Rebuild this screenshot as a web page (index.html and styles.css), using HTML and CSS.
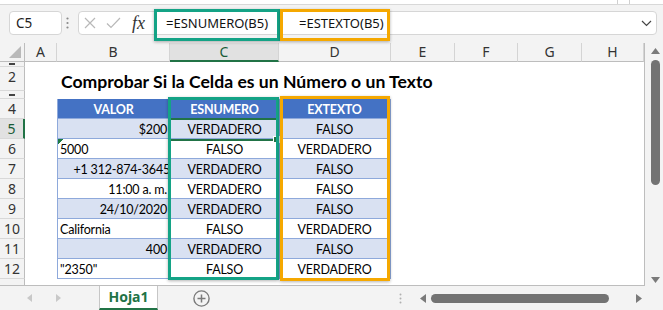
FILE: index.html
```html
<!DOCTYPE html>
<html>
<head>
<meta charset="UTF-8">
<title>ESNUMERO ESTEXTO</title>
<link rel="stylesheet" href="styles.css">
</head>
<body>
<div class="app">
	<!-- borde inferior de la cinta -->
	<div class="ribbon-edge"><span class="rb-sep"></span><span class="rb-sep"></span></div>

	<!-- barra de fórmulas -->
	<div class="formula-row">
		<div class="name-box">C5</div>
		<div class="grip">
			<svg width="3" height="12" viewBox="0 0 3 12"><circle cx="1.5" cy="1.5" r="1.1" fill="#8a8a8a"/><circle cx="1.5" cy="6" r="1.1" fill="#8a8a8a"/><circle cx="1.5" cy="10.5" r="1.1" fill="#8a8a8a"/></svg>
		</div>
		<div class="formula-box">
			<span class="fb-cancel"><svg width="12" height="12" viewBox="0 0 12 12"><path d="M1 1L11 11M11 1L1 11" stroke="#b8b8b8" stroke-width="1.2" fill="none"/></svg></span>
			<span class="fb-enter"><svg width="15" height="12" viewBox="0 0 15 12"><path d="M1 6.5L5 10.5L14 1" stroke="#b8b8b8" stroke-width="1.2" fill="none"/></svg></span>
			<span class="fx">fx</span>
			<span class="formula formula-1">=ESNUMERO(B5)</span>
			<span class="formula">=ESTEXTO(B5)</span>
			<span class="chevron"><svg width="11" height="7" viewBox="0 0 11 7"><path d="M1 1L5.5 5.5L10 1" stroke="#444" stroke-width="1.2" fill="none"/></svg></span>
		</div>
	</div>

	<!-- hoja -->
	<div class="sheet">
		<div class="grid">
			<div class="corner"><svg width="12" height="12" viewBox="0 0 12 12"><path d="M12 0V12H0Z" fill="#b9b9b9"/></svg></div>
			<div class="ch">A</div>
			<div class="ch">B</div>
			<div class="ch ch-sel">C</div>
			<div class="ch">D</div>
			<div class="ch">E</div>
			<div class="ch">F</div>
			<div class="ch">G</div>
			<div class="ch">H</div>

			<div class="rh rh-cut"><span class="dash"></span></div>
			<div class="blank span8"></div>

			<div class="rh">2</div>
			<div class="blank"></div>
			<div class="title">Comprobar Si la Celda es un Número o un Texto</div>

			<div class="rh rh-cut"><span class="dash"></span></div>
			<div class="blank span8"></div>

			<div class="rh">4</div>
			<div class="blank"></div>
			<div class="c tb th">VALOR</div>
			<div class="c tb th">ESNUMERO</div>
			<div class="c tb th last">EXTEXTO</div>
			<div class="blank span4"></div>

			<div class="rh rh-sel">5</div>
			<div class="blank"></div>
			<div class="c tb odd r">$200</div>
			<div class="c tb odd m">VERDADERO</div>
			<div class="c tb odd m last">FALSO</div>
			<div class="blank span4"></div>

			<div class="rh">6</div>
			<div class="blank"></div>
			<div class="c tb flag">5000</div>
			<div class="c tb m">FALSO</div>
			<div class="c tb m last">VERDADERO</div>
			<div class="blank span4"></div>

			<div class="rh">7</div>
			<div class="blank"></div>
			<div class="c tb odd r tight">+1 312-874-3645</div>
			<div class="c tb odd m">VERDADERO</div>
			<div class="c tb odd m last">FALSO</div>
			<div class="blank span4"></div>

			<div class="rh">8</div>
			<div class="blank"></div>
			<div class="c tb r">11:00 a. m.</div>
			<div class="c tb m">VERDADERO</div>
			<div class="c tb m last">FALSO</div>
			<div class="blank span4"></div>

			<div class="rh">9</div>
			<div class="blank"></div>
			<div class="c tb odd r">24/10/2020</div>
			<div class="c tb odd m">VERDADERO</div>
			<div class="c tb odd m last">FALSO</div>
			<div class="blank span4"></div>

			<div class="rh">10</div>
			<div class="blank"></div>
			<div class="c tb">California</div>
			<div class="c tb m">FALSO</div>
			<div class="c tb m last">VERDADERO</div>
			<div class="blank span4"></div>

			<div class="rh">11</div>
			<div class="blank"></div>
			<div class="c tb odd r">400</div>
			<div class="c tb odd m">VERDADERO</div>
			<div class="c tb odd m last">FALSO</div>
			<div class="blank span4"></div>

			<div class="rh">12</div>
			<div class="blank"></div>
			<div class="c tb">"2350"</div>
			<div class="c tb m">FALSO</div>
			<div class="c tb m last">VERDADERO</div>
			<div class="blank span4"></div>

			<div class="rh rh-end"></div>
			<div class="blank span8"></div>
		</div>

		<div class="vscroll">
			<svg width="9" height="6" viewBox="0 0 9 6"><path d="M4.5 0L9 6H0Z" fill="#7a7a7a"/></svg>
			<div class="vthumb"></div>
			<svg class="vdown" width="9" height="6" viewBox="0 0 9 6"><path d="M0 0H9L4.5 6Z" fill="#7a7a7a"/></svg>
		</div>
	</div>

	<!-- pestañas -->
	<div class="tabbar">
		<span class="nav nav-prev"><svg width="5" height="8" viewBox="0 0 5 8"><path d="M5 0V8L0 4Z" fill="#c8c8c8"/></svg></span>
		<span class="nav nav-next"><svg width="5" height="8" viewBox="0 0 5 8"><path d="M0 0L5 4L0 8Z" fill="#c8c8c8"/></svg></span>
		<div class="tab">Hoja1</div>
		<span class="add"><svg width="17" height="17" viewBox="0 0 17 17"><circle cx="8.5" cy="8.5" r="7.6" stroke="#7a7a7a" stroke-width="1.4" fill="none"/><path d="M8.5 4.5V12.5M4.5 8.5H12.5" stroke="#7a7a7a" stroke-width="1.5"/></svg></span>
		<span class="hgrip"><svg width="3" height="11" viewBox="0 0 3 11"><circle cx="1.5" cy="1.5" r="1" fill="#b0b0b0"/><circle cx="1.5" cy="5.5" r="1" fill="#b0b0b0"/><circle cx="1.5" cy="9.5" r="1" fill="#b0b0b0"/></svg></span>
		<span class="hleft"><svg width="6" height="9" viewBox="0 0 6 9"><path d="M6 0V9L0 4.5Z" fill="#7a7a7a"/></svg></span>
		<div class="hthumb"></div>
		<span class="hright"><svg width="6" height="9" viewBox="0 0 6 9"><path d="M0 0L6 4.5L0 9Z" fill="#7a7a7a"/></svg></span>
	</div>

	<!-- selección y marcos de color -->
	<div class="selection"><span class="handle"></span></div>
	<div class="mark teal mark-f1"></div>
	<div class="mark orange mark-f2"></div>
	<div class="mark teal mark-c"></div>
	<div class="mark orange mark-d"></div>
</div>
</body>
</html>
```

FILE: styles.css
```css
/* documento */
body {
	margin: 0;
	background: #f3f3f3;
	font-family: "Noto Sans", "Open Sans", sans-serif;
	color: #222;
}

.app {
	position: relative;
	width: 663px;
	height: 310px;
	overflow: hidden;
}

.ribbon-edge {
	height: 4px;
	background: #fff;
	border-bottom: 1px solid #d8d8d8;
	display: flex;
	justify-content: flex-end;
	gap: 11px;
	padding-right: 33px;
}

.rb-sep {
	width: 1px;
	background: #d0d0d0;
}

/* barra de fórmulas */
.formula-row {
	height: 38px;
	display: flex;
	align-items: flex-start;
	padding-top: 6px;
	box-sizing: border-box;
}

.name-box {
	margin-left: 9px;
	width: 53px;
	height: 24px;
	box-sizing: border-box;
	background: #fff;
	border: 1px solid #d6d6d6;
	border-radius: 4px;
	font-size: 13.5px;
	line-height: 22px;
	padding-left: 6px;
}

.grip {
	width: 10px;
	height: 24px;
	display: flex;
	align-items: center;
	justify-content: center;
}

.formula-box {
	flex: 1;
	margin-left: 6px;
	margin-right: 6px;
	height: 24px;
	box-sizing: border-box;
	background: #fff;
	border: 1px solid #d6d6d6;
	border-radius: 4px;
	display: flex;
	align-items: center;
	font-size: 13px;
}

.fb-cancel {
	display: flex;
	margin-left: 5px;
}

.fb-enter {
	display: flex;
	margin-left: 10px;
}

.fx {
	margin-left: 11px;
	width: 14px;
	font-family: "Liberation Serif", serif;
	font-style: italic;
	font-size: 18px;
	color: #333;
	line-height: 20px;
}

.formula {
	white-space: nowrap;
	color: #111;
}

.formula-1 {
	margin-left: 20px;
	width: 133px;
}

.chevron {
	display: flex;
	margin-left: auto;
	margin-right: 4px;
}

/* hoja */
.sheet {
	display: flex;
}

.grid {
	display: grid;
	grid-template-columns: 25px 32px 113px 109px 112px 64px 63px 64px 62px;
	grid-template-rows: 19px 5px 24px 8px repeat(9, 20px) 6px;
	background: #fff;
	border-right: 1px solid #bdbdbd;
	border-bottom: 1px solid #bdbdbd;
}

.grid > div {
	box-sizing: border-box;
}

.corner {
	background: #f3f3f3;
	border-right: 1px solid #bdbdbd;
	border-bottom: 1px solid #bdbdbd;
	display: flex;
	align-items: flex-end;
	justify-content: flex-end;
	padding: 0 3px 3px 0;
}

.ch {
	background: #f3f3f3;
	border-right: 1px solid #d4d4d4;
	border-bottom: 1px solid #bdbdbd;
	text-align: center;
	font-size: 14px;
	line-height: 18px;
	color: #333;
}

.ch-sel {
	background: #e1e1e1;
	border-bottom: 2px solid #217346;
	color: #185c37;
}

.rh {
	background: #f3f3f3;
	border-right: 1px solid #bdbdbd;
	border-bottom: 1px solid #d8d8d8;
	text-align: center;
	font-size: 14px;
	line-height: 19px;
	color: #333;
	overflow: hidden;
}

.rh-sel {
	background: #e1e1e1;
	border-right: 2px solid #217346;
	color: #185c37;
}

.rh-cut {
	display: flex;
	align-items: center;
	justify-content: center;
}

.rh-end {
	border-bottom: 0;
}

.dash {
	width: 6px;
	height: 2px;
	background: #444;
}

.span8 {
	grid-column: span 8;
}

.span4 {
	grid-column: span 4;
}

.title {
	grid-column: span 7;
	font-family: Lato, "Liberation Sans", sans-serif;
	font-weight: bold;
	font-size: 17.6px;
	line-height: 30px;
	padding-left: 4px;
	white-space: nowrap;
	color: #000;
}

/* tabla */
.c {
	font-family: Lato, "Liberation Sans", sans-serif;
	font-size: 12.5px;
	letter-spacing: -0.2px;
	line-height: 19px;
	padding: 1px 3px 0 2px;
	white-space: nowrap;
	overflow: hidden;
	color: #000;
}

.tb {
	border-left: 1px solid #8ea9db;
	border-bottom: 1px solid #8ea9db;
}

.tb.last {
	border-right: 1px solid #8ea9db;
}

.th {
	background: #4472c4;
	color: #fff;
	font-weight: bold;
	text-align: center;
	border-color: #4472c4 #8ea9db #8ea9db #8ea9db;
}

.odd {
	background: #d9e1f2;
}

.r {
	text-align: right;
}

.m {
	text-align: center;
}

.tight {
	padding-right: 0;
}

.flag {
	background: linear-gradient(135deg, #1f7a44 50%, transparent 50%) 0 0 / 6px 6px no-repeat, #fff;
}

/* barra de desplazamiento vertical */
.vscroll {
	width: 18px;
	display: flex;
	flex-direction: column;
	align-items: flex-start;
	padding: 5px 0 3px 6px;
	box-sizing: border-box;
}

.vthumb {
	margin-top: 6px;
	width: 9px;
	height: 125px;
	border-radius: 5px;
	background: #737373;
}

.vdown {
	margin-top: auto;
}

/* pestañas */
.tabbar {
	height: 24px;
	display: flex;
	align-items: center;
	padding-left: 27px;
}

.nav {
	display: flex;
}

.nav-next {
	margin-left: 24px;
}

.tab {
	margin-left: 38px;
	align-self: stretch;
	width: 59px;
	box-sizing: border-box;
	background: #fff;
	border-left: 1px solid #c6c6c6;
	border-right: 1px solid #c6c6c6;
	border-bottom: 2px solid #217346;
	text-align: center;
	font-weight: bold;
	font-size: 14px;
	line-height: 22px;
	color: #217346;
}

.add {
	display: flex;
	margin-left: 35px;
}

.hgrip {
	display: flex;
	margin-left: 189px;
}

.hleft {
	display: flex;
	margin-left: 18px;
}

.hthumb {
	margin-left: 5px;
	width: 178px;
	height: 9px;
	border-radius: 5px;
	background: #737373;
}

.hright {
	display: flex;
	margin-left: 27px;
}

/* selección activa y marcos */
.selection {
	position: absolute;
	left: 169px;
	top: 118px;
	width: 109px;
	height: 23px;
	box-sizing: border-box;
	border: 2px solid #217346;
}

.handle {
	position: absolute;
	right: -4px;
	bottom: -4px;
	width: 5px;
	height: 5px;
	background: #217346;
	border: 1px solid #fff;
}

.mark {
	position: absolute;
	box-sizing: border-box;
	border: 3px solid;
	box-shadow: 0 1px 3px rgba(0, 0, 0, 0.3);
}

.teal {
	border-color: #14a386;
}

.orange {
	border-color: #f5a800;
}

.mark-f1 {
	left: 154px;
	top: 9px;
	width: 126px;
	height: 32px;
}

.mark-f2 {
	left: 280px;
	top: 9px;
	width: 110px;
	height: 32px;
}

.mark-c {
	left: 168px;
	top: 97px;
	width: 111px;
	height: 183px;
}

.mark-d {
	left: 280px;
	top: 96px;
	width: 110px;
	height: 185px;
}
```
